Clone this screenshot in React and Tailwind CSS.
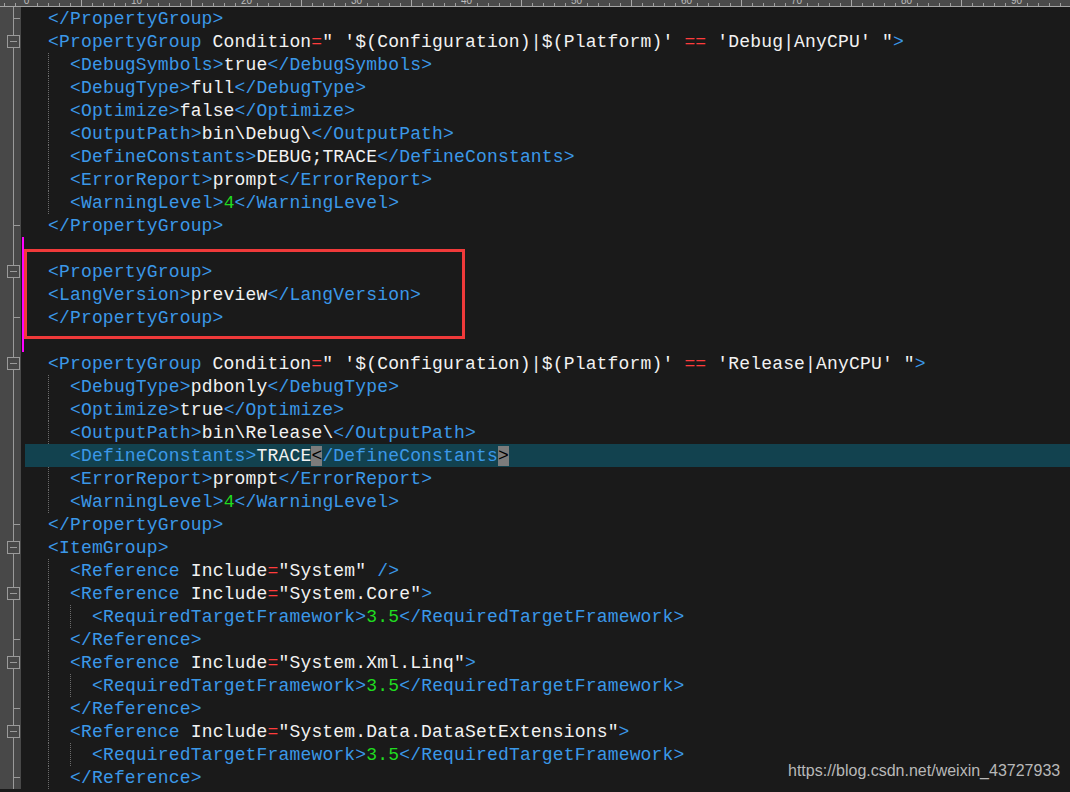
import React from "react";

const LINES = [
  [2, "</PropertyGroup>", "end"],
  [2, `<PropertyGroup Condition=" '$(Configuration)|$(Platform)' == 'Debug|AnyCPU' ">`, "box"],
  [4, "<DebugSymbols>true</DebugSymbols>"],
  [4, "<DebugType>full</DebugType>"],
  [4, "<Optimize>false</Optimize>"],
  [4, "<OutputPath>bin\\Debug\\</OutputPath>"],
  [4, "<DefineConstants>DEBUG;TRACE</DefineConstants>"],
  [4, "<ErrorReport>prompt</ErrorReport>"],
  [4, "<WarningLevel>4</WarningLevel>"],
  [2, "</PropertyGroup>", "end"],
  [0, ""],
  [2, "<PropertyGroup>", "box"],
  [2, "<LangVersion>preview</LangVersion>"],
  [2, "</PropertyGroup>", "end"],
  [0, ""],
  [2, `<PropertyGroup Condition=" '$(Configuration)|$(Platform)' == 'Release|AnyCPU' ">`, "box"],
  [4, "<DebugType>pdbonly</DebugType>"],
  [4, "<Optimize>true</Optimize>"],
  [4, "<OutputPath>bin\\Release\\</OutputPath>"],
  [4, "HL"],
  [4, "<ErrorReport>prompt</ErrorReport>"],
  [4, "<WarningLevel>4</WarningLevel>"],
  [2, "</PropertyGroup>", "end"],
  [2, "<ItemGroup>", "box"],
  [4, '<Reference Include="System" />'],
  [4, '<Reference Include="System.Core">', "box"],
  [6, "<RequiredTargetFramework>3.5</RequiredTargetFramework>"],
  [4, "</Reference>", "end"],
  [4, '<Reference Include="System.Xml.Linq">', "box"],
  [6, "<RequiredTargetFramework>3.5</RequiredTargetFramework>"],
  [4, "</Reference>", "end"],
  [4, '<Reference Include="System.Data.DataSetExtensions">', "box"],
  [6, "<RequiredTargetFramework>3.5</RequiredTargetFramework>"],
  [4, "</Reference>", "end"],
];

// the line with the caret: brackets of the matching tag get a grey box
const HL_TOKENS = [
  ["b", "<DefineConstants>"],
  ["w", "TRACE"],
  ["m", "<"],
  ["b", "/DefineConstants"],
  ["m", ">"],
];

const tokenize = (line) => {
  const out = [];
  let i = 0;
  let inTag = false;
  while (i < line.length) {
    const rest = line.slice(i);
    let m;
    if (!inTag && (m = rest.match(/^<\/?[\w.]+/))) {
      out.push(["b", m[0]]);
      inTag = true;
    } else if (inTag && (m = rest.match(/^\/?>/))) {
      out.push(["b", m[0]]);
      inTag = false;
    } else if (inTag && (m = rest.match(/^"[^"]*"/))) {
      m[0].split(/(==)/).forEach((p) => p && out.push([p === "==" ? "r" : "w", p]));
    } else if (inTag && (m = rest.match(/^=/))) {
      out.push(["r", "="]);
    } else if (inTag && (m = rest.match(/^[^"=>/]+/))) {
      out.push(["w", m[0]]);
    } else if (!inTag && (m = rest.match(/^[^<]+/))) {
      out.push([/^[\d.]+$/.test(m[0]) ? "g" : "w", m[0]]);
    } else {
      m = [rest[0]];
      out.push(["w", rest[0]]);
    }
    i += m[0].length;
  }
  return out;
};

const colors = {
  b: "text-[#3b98e8]",
  w: "text-[#f2f2f2]",
  r: "text-[#ff3c3c]",
  g: "text-[#20dc20]",
  m: "text-black bg-[#7c7c7c]",
};

const Ruler = () => {
  const ticks = [];
  for (let c = -2; c < 96; c++) {
    const x = 26 + 11 * c + 0.5;
    if (c % 10 === 0) {
      ticks.push(
        <text key={c} x={x} y="4" fontSize="10" textAnchor="middle" fill="#bdbdbd" fontFamily="Liberation Sans, sans-serif">
          {c}
        </text>
      );
    } else if (c % 5 === 0) {
      ticks.push(<line key={c} x1={x} y1="0" x2={x} y2="6" stroke="#a8a8a8" />);
    } else {
      ticks.push(<line key={c} x1={x} y1="3" x2={x} y2="6" stroke="#a0a0a0" />);
    }
  }
  return (
    <svg width="1070" height="7" className="block shrink-0 bg-[#4a4a4a]">
      {ticks}
      <line x1="0" y1="6.5" x2="1070" y2="6.5" stroke="#a4a4a4" />
    </svg>
  );
};

const Fold = ({ kind }) => (
  <svg width="21" height="23" className="block">
    <line x1="13.5" y1="0" x2="13.5" y2="23" stroke="#9a9a9a" />
    {kind === "box" && (
      <>
        <rect x="7.5" y="5.5" width="12" height="12" fill="#484848" stroke="#9a9a9a" />
        <line x1="10" y1="11.5" x2="17" y2="11.5" stroke="#9a9a9a" />
      </>
    )}
    {kind === "end" && <line x1="13.5" y1="11.5" x2="20" y2="11.5" stroke="#9a9a9a" />}
  </svg>
);

const Row = ({ indent, text, fold, idx }) => {
  const hl = text === "HL";
  const changed = idx >= 10 && idx <= 14;
  const tokens = hl ? HL_TOKENS : tokenize(text);
  const guides = [];
  for (let k = 0; k < indent / 2; k++) {
    guides.push(
      <span
        key={k}
        className={
          "inline-block w-[22px] h-[23px] shrink-0 " +
          (k > 0 && !hl ? "border-l border-dotted border-[#6c6c6c]" : "")
        }
      />
    );
  }
  return (
    <div className="flex h-[23px]">
      <div className="w-[21px] shrink-0 bg-[#484848]">
        <Fold kind={fold} />
      </div>
      <div className="w-[4px] shrink-0 pl-[1px]">
        {changed && <div className="w-[2px] h-full bg-[#ff00ff]" />}
      </div>
      <div className={"flex-1 flex pl-[1px] " + (hl ? "bg-[#12424f]" : "")}>
        {guides}
        <span className="whitespace-pre pt-[1px]">
          {tokens.map(([t, s], i) => (
            <span key={i} className={colors[t]}>
              {s}
            </span>
          ))}
        </span>
      </div>
    </div>
  );
};

export default function App() {
  return (
    <div className="relative w-[1070px] h-[792px] overflow-hidden bg-[#1a1a1a] flex flex-col">
      <Ruler />
      <div className="flex flex-col font-['Liberation_Mono',monospace] text-[18px] leading-[23px] tracking-[0.17px]">
        {LINES.map(([indent, text, fold], i) => (
          <Row key={i} idx={i} indent={indent} text={text} fold={fold} />
        ))}
      </div>
      <div className="absolute left-[24px] top-[249px] w-[441px] h-[90px] border-[3px] border-[#f03a3a]" />
      <div className="absolute left-[788px] top-[763px] font-['Liberation_Sans',Arial,sans-serif] text-[16px] leading-none text-[#b8b8b8]">
        https://blog.csdn.net/weixin_43727933
      </div>
    </div>
  );
}
